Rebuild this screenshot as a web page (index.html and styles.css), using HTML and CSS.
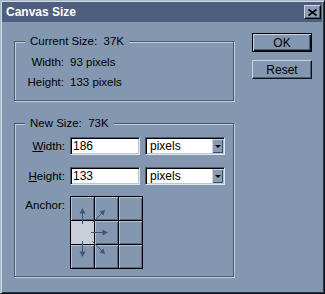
FILE: index.html
```html
<!DOCTYPE html>
<html lang="en">
<head>
    <meta charset="UTF-8">
    <title>Canvas Size</title>
    <link rel="stylesheet" href="styles.css">
</head>
<body>

    <div class="window">
        <div class="titlebar">
            <span class="title">Canvas Size</span>
            <span class="close">
                <svg width="9" height="7" viewBox="0 0 9 7">
                    <path d="M0.5 0.5 L8.5 6.5 M8.5 0.5 L0.5 6.5" stroke="#000" stroke-width="1.8" fill="none"/>
                </svg>
            </span>
        </div>

        <div class="main">
            <div class="groups">
                <div class="group current">
                    <div class="legend">Current Size:&nbsp; 37K</div>
                    <div class="info-row">
                        <span class="label">Width:</span>
                        <span>93 pixels</span>
                    </div>
                    <div class="info-row">
                        <span class="label">Height:</span>
                        <span>133 pixels</span>
                    </div>
                </div>

                <div class="group new">
                    <div class="legend">New Size:&nbsp; 73K</div>
                    <div class="field-row">
                        <label class="label" for="newWidth"><u>W</u>idth:</label>
                        <input class="field" id="newWidth" type="text" value="186">
                        <div class="select">
                            <span>pixels</span>
                            <span class="drop"></span>
                        </div>
                    </div>
                    <div class="field-row">
                        <label class="label" for="newHeight"><u>H</u>eight:</label>
                        <input class="field" id="newHeight" type="text" value="133">
                        <div class="select">
                            <span>pixels</span>
                            <span class="drop"></span>
                        </div>
                    </div>
                    <div class="anchor-row">
                        <span class="label">Anchor:</span>
                        <div class="anchor">
                            <div class="cell"></div>
                            <div class="cell"></div>
                            <div class="cell"></div>
                            <div class="cell on"></div>
                            <div class="cell"></div>
                            <div class="cell"></div>
                            <div class="cell"></div>
                            <div class="cell"></div>
                            <div class="cell"></div>
                            <!-- arrows pointing away from the chosen anchor -->
                            <svg class="arrows" width="73" height="73" viewBox="0 0 73 73">
                                <g stroke="#46556e" stroke-width="1" fill="none">
                                    <path d="M12.5 17 V28"/>
                                    <path d="M12.5 45 V56"/>
                                    <path d="M21 36.5 H33"/>
                                    <path d="M22.5 26.5 L31.5 17.5"/>
                                    <path d="M22.5 45.5 L31.5 54.5"/>
                                </g>
                                <g fill="#46556e">
                                    <polygon points="12.5,12 9.5,17.5 15.5,17.5"/>
                                    <polygon points="12.5,61 9.5,55.5 15.5,55.5"/>
                                    <polygon points="38,36.5 32.5,33.5 32.5,39.5"/>
                                    <polygon points="35,14 29.5,15.5 33.5,19.5"/>
                                    <polygon points="35,58 33.5,52.5 29.5,56.5"/>
                                </g>
                            </svg>
                        </div>
                    </div>
                </div>
            </div>

            <div class="buttons">
                <button class="btn default">OK</button>
                <button class="btn">Reset</button>
            </div>
        </div>
    </div>

</body>
</html>
```

FILE: styles.css
```css
body {
    margin: 0;
    font-family: 'Liberation Sans', Arial, sans-serif;
    font-size: 11.5px;
    color: #000;
}
.window {
    width: 325px;
    height: 294px;
    box-sizing: border-box;
    background: #8497b0;
    border: 1px solid;
    border-color: #a9b8ca #0c1018 #0c1018 #a9b8ca;
    box-shadow: inset 1px 1px 0 #d0d8e2, inset -1px -1px 0 #2c3646;
    padding: 1px;
}
.titlebar {
    height: 20px;
    margin-right: 1px;
    background: #4e5e7e;
    display: flex;
    align-items: center;
    justify-content: space-between;
    padding: 0 1px 0 4px;
}
.title {
    color: #fff;
    font-weight: bold;
    font-size: 12px;
}
.close {
    width: 17px;
    height: 14px;
    box-sizing: border-box;
    background: #8a9db5;
    border: 1px solid;
    border-color: #c8d4e0 #000 #000 #c8d4e0;
    box-shadow: inset -1px -1px 0 #4e5c74;
    display: flex;
    align-items: center;
    justify-content: center;
}
.main {
    display: flex;
    padding: 11px 0 0 12px;
}
.groups {
    margin-top: 8px;
}
.group {
    box-sizing: border-box;
    width: 220px;
    border: 1px solid #4a5872;
    box-shadow: 1px 1px 0 #c4cfdb, inset 1px 1px 0 #c4cfdb;
}
.current {
    height: 60px;
}
.new {
    height: 154px;
    margin-top: 22px;
}
.legend {
    display: table;
    margin: -8px 0 0 10px;
    padding: 0 5px;
    line-height: 14px;
    background: #8497b0;
}
.info-row {
    display: grid;
    grid-template-columns: 49px auto;
    column-gap: 6px;
    height: 20px;
    align-items: center;
}
.current .legend {
    margin-bottom: 4px;
}
.label {
    text-align: right;
}
.field-row {
    display: grid;
    grid-template-columns: 50px 70px 80px;
    column-gap: 5px;
    align-items: center;
    height: 18px;
    margin-top: 12px;
}
.new .legend {
    margin-bottom: -5px;
}
.field,
.select {
    box-sizing: border-box;
    height: 18px;
    border: 1px solid;
    border-color: #4a5872 #dfe6ee #dfe6ee #4a5872;
    box-shadow: inset 1px 1px 0 #000, inset -1px -1px 0 #b9c5d2;
    background: #fff;
    font-family: 'Liberation Sans', Arial, sans-serif;
    font-size: 12px;
}
.field {
    width: 70px;
    margin: 0;
    padding: 0 2px;
    outline: none;
}
.select {
    display: flex;
    align-items: center;
    justify-content: space-between;
    padding: 1px 1px 1px 4px;
}
.drop {
    align-self: stretch;
    width: 11px;
    background: #8a9db5;
    box-shadow: inset 1px 1px 0 #c8d4e0, inset -1px -1px 0 #3e4b60;
    display: flex;
    align-items: center;
    justify-content: center;
}
.drop::after {
    content: "";
    border-left: 3px solid transparent;
    border-right: 3px solid transparent;
    border-top: 3px solid #000;
}
.anchor-row {
    display: grid;
    grid-template-columns: 50px auto;
    column-gap: 5px;
    align-items: start;
    margin-top: 11px;
}
.anchor-row .label {
    margin-top: 2px;
    line-height: 14px;
}
.anchor {
    position: relative;
    width: max-content;
    display: grid;
    grid-template-columns: repeat(3, 23px);
    grid-auto-rows: 23px;
    gap: 1px;
    padding: 1px;
    background: #000;
}
.cell {
    background: #8497b0;
    box-shadow: inset 1px 1px 0 #b4c2d2, inset -1px -1px 0 #5a6a84;
}
.cell.on {
    background: #c9cfd8;
    box-shadow: none;
}
.arrows {
    position: absolute;
    left: 0;
    top: 0;
    pointer-events: none;
}
.buttons {
    margin-left: 18px;
    display: flex;
    flex-direction: column;
}
.btn {
    display: block;
    width: 60px;
    height: 19px;
    box-sizing: border-box;
    padding: 0;
    font-family: 'Liberation Sans', Arial, sans-serif;
    font-size: 12px;
    color: #000;
    background: #8497b0;
    border: 1px solid;
    border-color: #c8d4e0 #0c1018 #0c1018 #c8d4e0;
    box-shadow: inset -1px -1px 0 #4e5c74;
}
.btn + .btn {
    margin-top: 8px;
}
.default {
    border-color: #000;
    box-shadow: inset 1px 1px 0 #c8d4e0, inset -1px -1px 0 #0c1018, inset -2px -2px 0 #4e5c74;
}
```
